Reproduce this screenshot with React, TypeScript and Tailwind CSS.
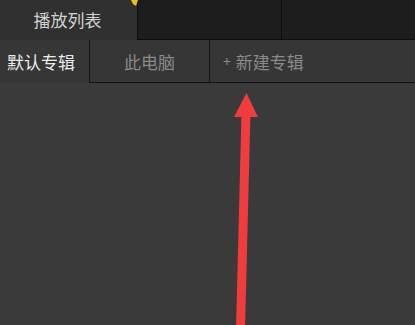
import React from "react";

export default function App() {
  const font = { fontFamily: '"Noto Sans CJK SC", "Noto Sans", sans-serif' };
  return (
    <div className="relative w-[415px] h-[325px] overflow-hidden bg-[#3a3a3a]" style={font}>
      {/* top row */}
      <div className="flex h-[40px]">
        <div className="w-[137px] bg-[#303030] flex items-center justify-center text-[17px] text-[#d2d2d2] leading-none pb-[1px] pr-[2px]">
          播放列表
        </div>
        <div className="flex-1 flex bg-[#1d1d1d] border-l border-b border-[#0c0c0c]">
          <div className="w-[144px] border-r border-[#0c0c0c]" />
          <div className="flex-1" />
        </div>
      </div>
      {/* second row */}
      <div className="flex h-[43px] bg-[#363636]">
        <div className="w-[89px] flex items-center pl-[7px] text-[17px] text-[#ececec] leading-none">
          默认专辑
        </div>
        <div className="w-[120px] flex items-center justify-center border-l border-b border-[#111] text-[17px] text-[#8a8a8a] leading-none">
          此电脑
        </div>
        <div className="flex-1 flex items-center pl-[13px] border-l border-b border-[#111] text-[17px] text-[#8a8a8a] leading-none">
          <span className="text-[14px] mr-[5px]">+</span>
          新建专辑
        </div>
      </div>
      {/* yellow cursor blob */}
      <svg className="absolute left-[128px] top-0" width="12" height="8" viewBox="0 0 12 8">
        <polygon points="3,0 10,0 8,6 5,4" fill="#e8c41c" />
      </svg>
      {/* red arrow */}
      <svg className="absolute left-0 top-0" width="415" height="325" viewBox="0 0 415 325">
        <path d="M240.5 330 L246 112" stroke="#f03c3c" strokeWidth="9" strokeLinecap="butt" fill="none" />
        <polygon points="246.5,93 258,117 234,117" fill="#f03c3c" />
      </svg>
    </div>
  );
}
